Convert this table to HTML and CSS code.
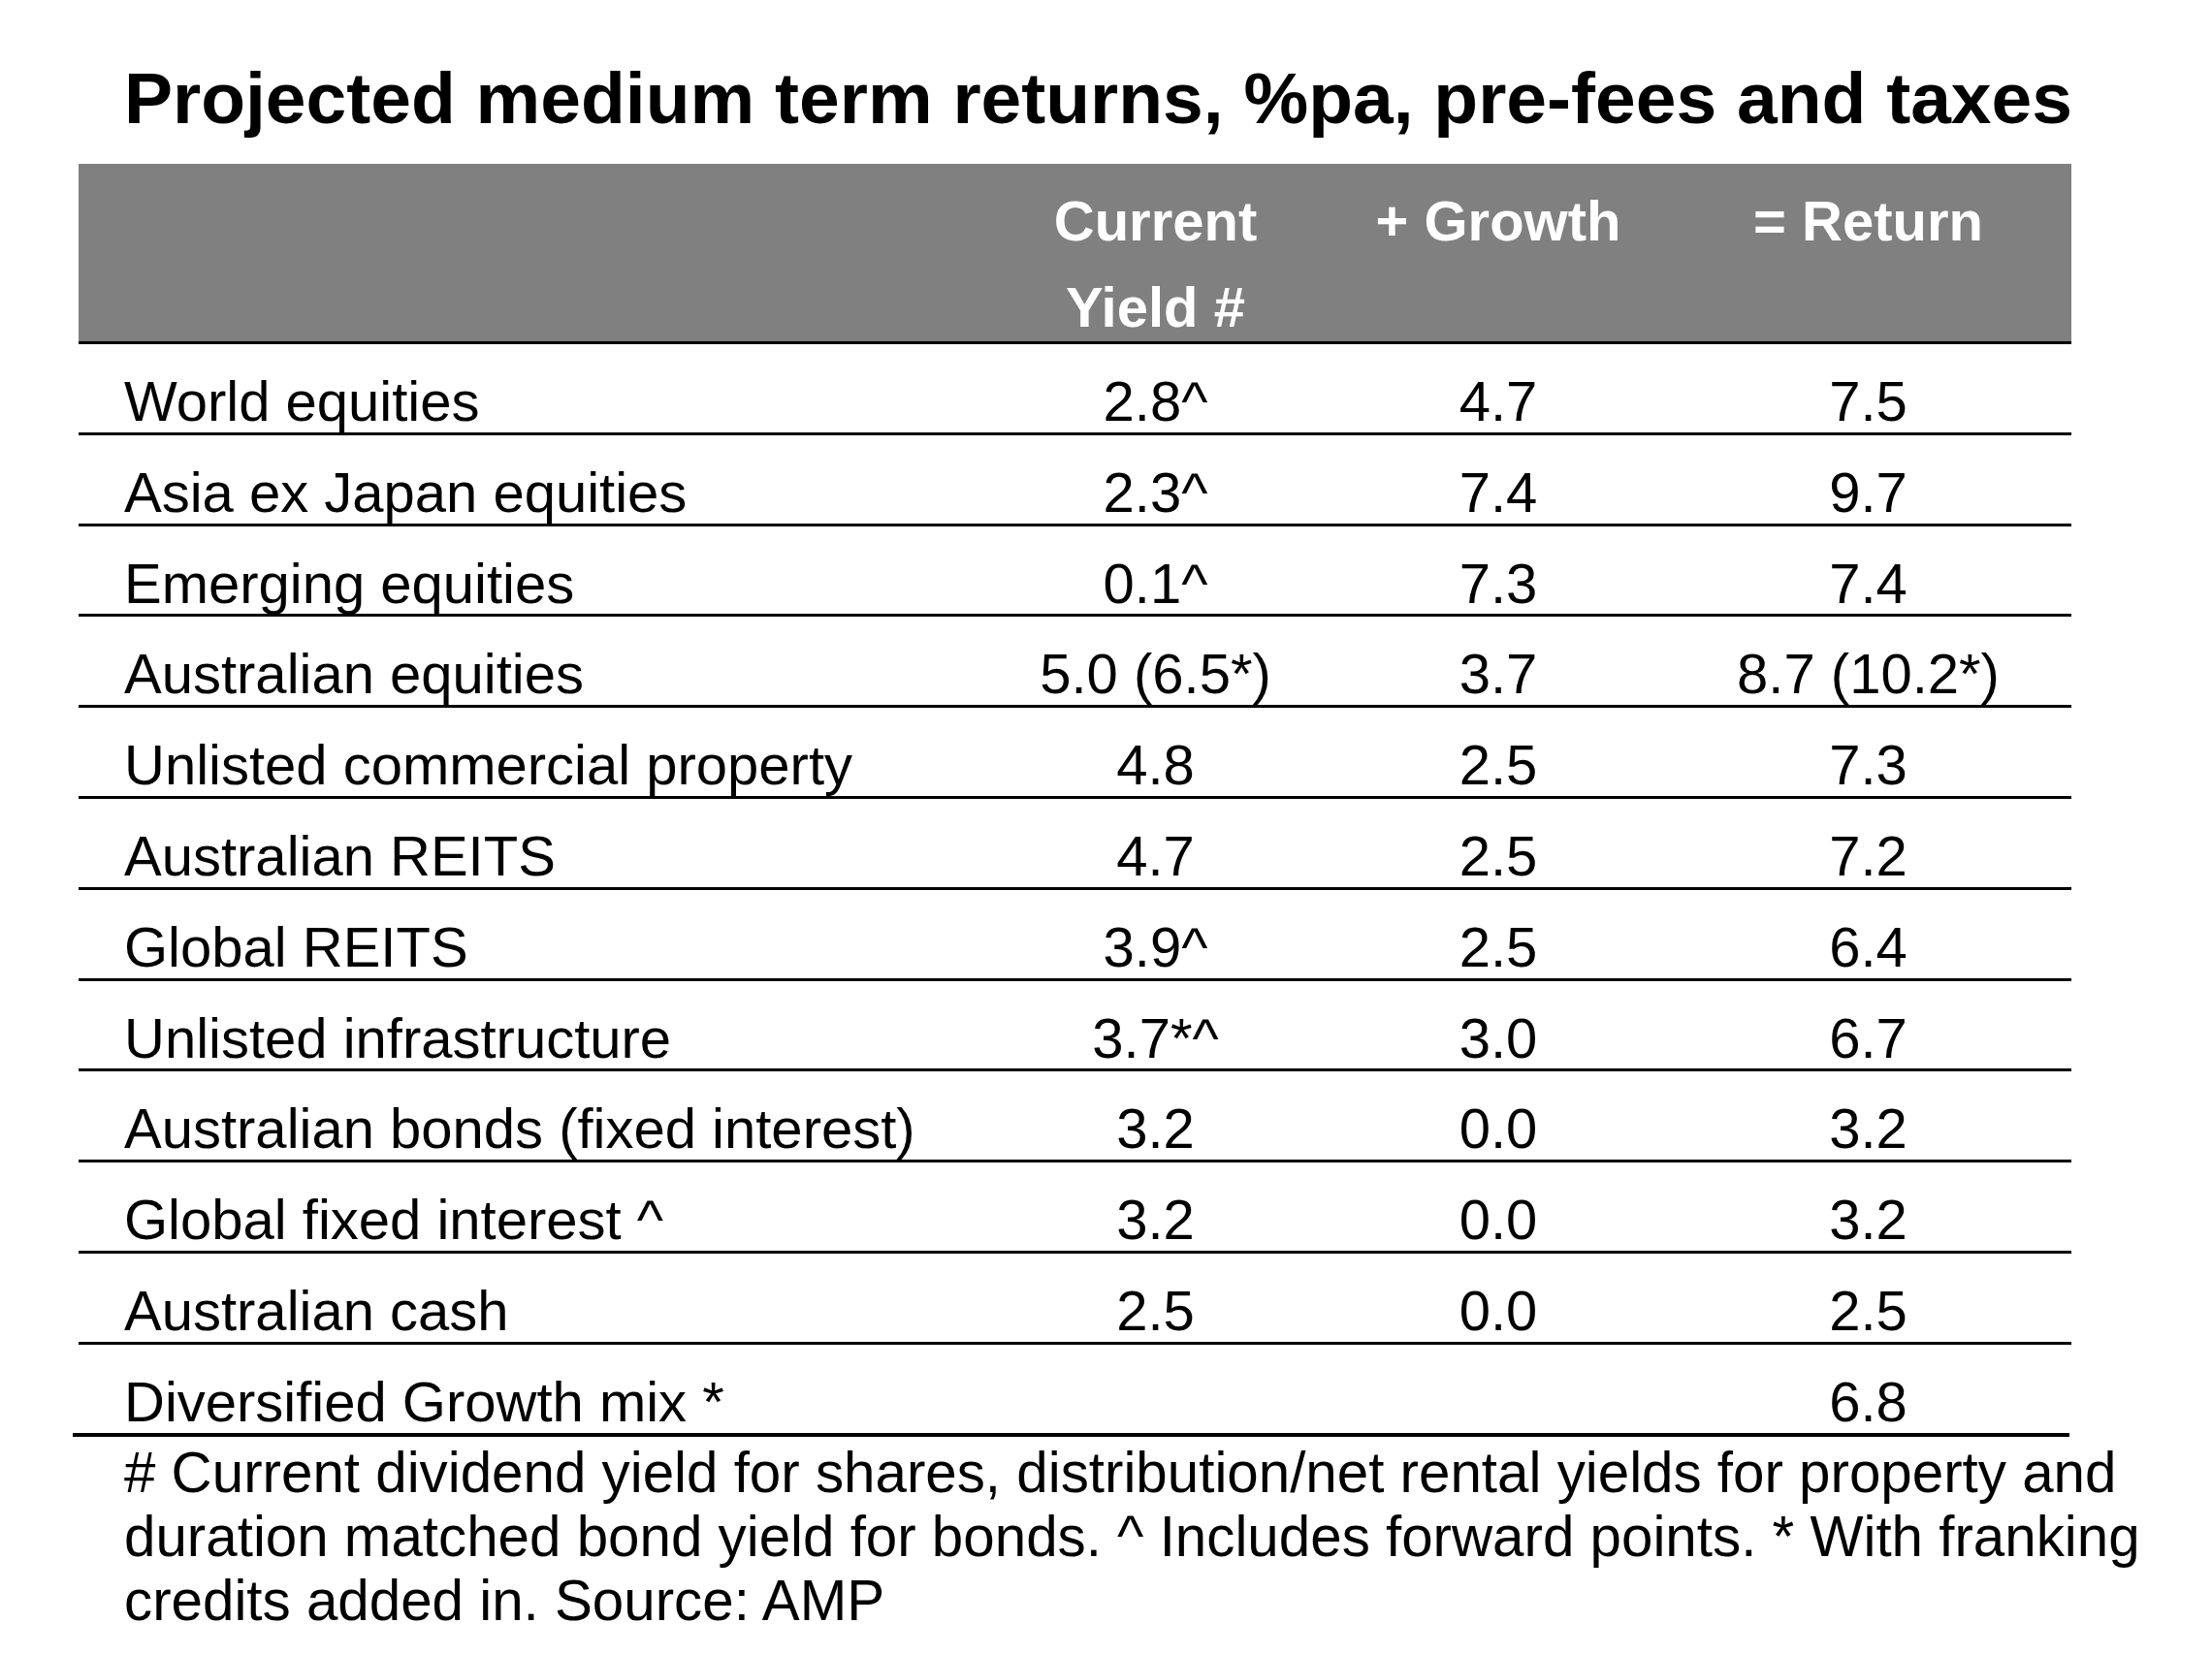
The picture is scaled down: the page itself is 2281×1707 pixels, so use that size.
FILE: index.html
```html
<!DOCTYPE html>
<html>
<head>
<meta charset="utf-8">
<link rel="stylesheet" href="styles.css">
</head>
<body>
<div class="page">
  <h1 class="title">Projected medium term returns, %pa, pre-fees and taxes</h1>
  <div class="table">
    <div class="head">
      <div class="cell label"></div>
      <div class="cell">Current<br>Yield #</div>
      <div class="cell">+ Growth</div>
      <div class="cell">= Return</div>
    </div>
    <div class="row"><div class="cell label">World equities</div><div class="cell">2.8^</div><div class="cell">4.7</div><div class="cell">7.5</div></div>
    <div class="row"><div class="cell label">Asia ex Japan equities</div><div class="cell">2.3^</div><div class="cell">7.4</div><div class="cell">9.7</div></div>
    <div class="row"><div class="cell label">Emerging equities</div><div class="cell">0.1^</div><div class="cell">7.3</div><div class="cell">7.4</div></div>
    <div class="row"><div class="cell label">Australian equities</div><div class="cell">5.0 (6.5*)</div><div class="cell">3.7</div><div class="cell">8.7 (10.2*)</div></div>
    <div class="row"><div class="cell label">Unlisted commercial property</div><div class="cell">4.8</div><div class="cell">2.5</div><div class="cell">7.3</div></div>
    <div class="row"><div class="cell label">Australian REITS</div><div class="cell">4.7</div><div class="cell">2.5</div><div class="cell">7.2</div></div>
    <div class="row"><div class="cell label">Global REITS</div><div class="cell">3.9^</div><div class="cell">2.5</div><div class="cell">6.4</div></div>
    <div class="row"><div class="cell label">Unlisted infrastructure</div><div class="cell">3.7*^</div><div class="cell">3.0</div><div class="cell">6.7</div></div>
    <div class="row"><div class="cell label">Australian bonds (fixed interest)</div><div class="cell">3.2</div><div class="cell">0.0</div><div class="cell">3.2</div></div>
    <div class="row"><div class="cell label">Global fixed interest ^</div><div class="cell">3.2</div><div class="cell">0.0</div><div class="cell">3.2</div></div>
    <div class="row"><div class="cell label">Australian cash</div><div class="cell">2.5</div><div class="cell">0.0</div><div class="cell">2.5</div></div>
    <div class="row last"><div class="cell label">Diversified Growth mix *</div><div class="cell"></div><div class="cell"></div><div class="cell">6.8</div></div>
  </div>
  <p class="note"># Current dividend yield for shares, distribution/net rental yields for property and<br>duration matched bond yield for bonds. ^ Includes forward points. * With franking<br>credits added in. Source: AMP</p>
</div>
</body>
</html>
```

FILE: styles.css
```css
html, body {
  margin: 0;
  padding: 0;
  background: #ffffff;
}
body {
  font-family: "Liberation Sans", Arial, sans-serif;
  color: #000000;
}
.page {
  margin-left: 81px;
  width: 2055px;
}
.title {
  margin: 58px 0 0 47px;
  font-size: 75px;
  line-height: 86px;
  height: 111px;
  font-weight: bold;
  white-space: nowrap;
}
.table {
  width: 2055px;
}
.head, .row {
  display: grid;
  grid-template-columns: 929px 363px 344px 1fr;
  box-sizing: border-box;
}
.head {
  background: #808080;
  color: #ffffff;
  font-weight: bold;
  font-size: 58px;
  line-height: 89px;
  height: 186px;
  padding-top: 14px;
  border-bottom: 3px solid #000000;
  overflow: visible;
}
.row {
  font-size: 58px;
  line-height: 58px;
  height: 93.8px;
  padding-top: 30px;
  border-bottom: 3px solid #000000;
}
.row.last {
  border-bottom: none;
  height: 90.8px;
}
.cell {
  text-align: center;
  white-space: nowrap;
}
.cell.label {
  text-align: left;
  padding-left: 47px;
}
.note {
  margin: 0 0 0 -6px;
  padding: 4px 0 0 53px;
  border-top: 4px solid #000000;
  width: 2006px;
  font-size: 58.3px;
  line-height: 66px;
  white-space: nowrap;
}
```
